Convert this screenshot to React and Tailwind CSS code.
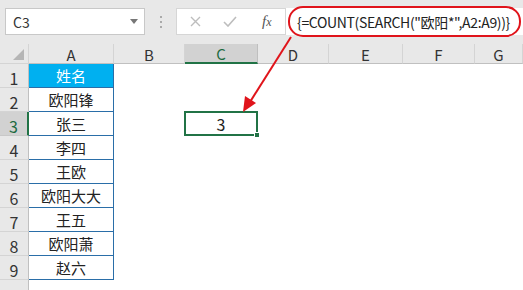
import React from "react";

const cols = [
  { k: "A", w: "w-[85px]" },
  { k: "B", w: "w-[71px]" },
  { k: "C", w: "w-[73px]" },
  { k: "D", w: "w-[71px]" },
  { k: "E", w: "w-[74px]" },
  { k: "F", w: "w-[72px]" },
  { k: "G", w: "flex-1" },
];

const names = ["姓名", "欧阳锋", "张三", "李四", "王欧", "欧阳大大", "王五", "欧阳萧", "赵六", ""];

export default function App() {
  return (
    <div className="relative w-[523px] h-[290px] overflow-hidden bg-white" style={{ fontFamily: '"Noto Sans CJK SC", "Liberation Sans", sans-serif' }}>
      {/* toolbar */}
      <div className="h-[44px] bg-[#e8e8e8] flex items-start pt-[8px]">
        <div className="shrink-0 ml-[5px] w-[140px] h-[27px] bg-white border border-[#c8c8c8] flex items-center justify-between pl-[7px] pr-[6px]">
          <span className="text-[14px] text-[#333] leading-none">C3</span>
          <svg width="8" height="5" viewBox="0 0 8 5"><path d="M0 0h8L4 5z" fill="#777" /></svg>
        </div>
        <div className="shrink-0 w-[31px] h-[27px] flex flex-col items-center justify-center gap-[3px]">
          <span className="w-[2px] h-[2px] bg-[#aaa]" />
          <span className="w-[2px] h-[2px] bg-[#aaa]" />
          <span className="w-[2px] h-[2px] bg-[#aaa]" />
        </div>
        <div className="shrink-0 w-[110px] h-[27px] bg-white border border-[#d6d6d6] flex items-center">
          <svg className="ml-[13px]" width="11" height="11" viewBox="0 0 11 11"><path d="M1 1L10 10M10 1L1 10" stroke="#bdbdbd" strokeWidth="1.4" /></svg>
          <svg className="ml-[22px]" width="14" height="11" viewBox="0 0 14 11"><path d="M1 6L5 10L13 1" stroke="#bdbdbd" strokeWidth="1.6" fill="none" /></svg>
          <span className="ml-[25px] text-[15px] italic text-[#555] leading-none" style={{ fontFamily: '"Liberation Serif", serif' }}>f<span className="text-[12px]">x</span></span>
        </div>
        <div className="min-w-0 flex-1 h-[27px] bg-white flex items-center pl-[11px] overflow-hidden">
          <span className="text-[14px] tracking-[-0.35px] text-[#222] leading-none whitespace-nowrap">{'{=COUNT(SEARCH("欧阳*",A2:A9))}'}</span>
        </div>
      </div>
      {/* header row */}
      <div className="flex h-[20px] bg-[#e8e8e8]">
        <div className="w-[29px] relative border-r border-[#d4d4d4] border-b">
          <svg className="absolute right-[4px] bottom-[3px]" width="11" height="11" viewBox="0 0 11 11"><path d="M11 0V11H0z" fill="#b5b5b5" /></svg>
        </div>
        {cols.map((c) => (
          <div
            key={c.k}
            className={`${c.w} flex items-end justify-center text-[15px] leading-none pb-[1px] ${c.k === "C" ? "bg-[#d2d2d2] text-[#1e6b41] border-b-2 border-[#217346] border-r border-r-[#bfbfbf]" : "text-[#333] border-r border-[#d4d4d4] border-b border-b-[#c0c0c0]"}`}
          >
            {c.k}
          </div>
        ))}
      </div>
      {/* rows */}
      {names.map((n, i) => {
        const r = i + 1;
        const sel = r === 3;
        return (
          <div key={r} className="flex h-[24px]">
            <div className={`w-[29px] flex items-end justify-center pb-[1px] text-[16px] leading-none border-b ${sel ? "bg-[#d2d2d2] text-[#1e6b41] border-b-[#c8c8c8] border-r-2 border-r-[#217346]" : "bg-[#e8e8e8] text-[#333] border-[#d4d4d4] border-r border-r-[#c0c0c0]"}`}>
              {r <= 9 ? r : ""}
            </div>
            <div className={`w-[85px] flex items-center justify-center text-[15px] leading-none ${r <= 9 ? "border-r border-b border-[#2a6ea8]" : ""} ${r === 1 ? "bg-[#00b0f0] text-white" : "text-[#222]"}`}>
              {n}
            </div>
            <div className="w-[71px]" />
            <div className="w-[73px] relative">
              {sel && (
                <div className="absolute -left-[1px] -top-[1px] w-[74px] h-[25px] border-2 border-[#217346] flex items-center justify-center text-[16px] text-[#222] leading-none">
                  3
                  <span className="absolute -right-[4px] -bottom-[4px] w-[6px] h-[6px] bg-[#217346] border border-white" />
                </div>
              )}
            </div>
            <div className="flex-1" />
          </div>
        );
      })}
      {/* annotation overlay */}
      <svg className="absolute left-0 top-0 pointer-events-none" width="523" height="290">
        <rect x="289" y="7" width="231" height="29" rx="14" ry="14" fill="none" stroke="#e0141b" strokeWidth="2" />
        <line x1="291" y1="37" x2="250" y2="102" stroke="#e0141b" strokeWidth="2" />
        <path d="M243 112L245 96L256 103z" fill="#e0141b" />
      </svg>
    </div>
  );
}
